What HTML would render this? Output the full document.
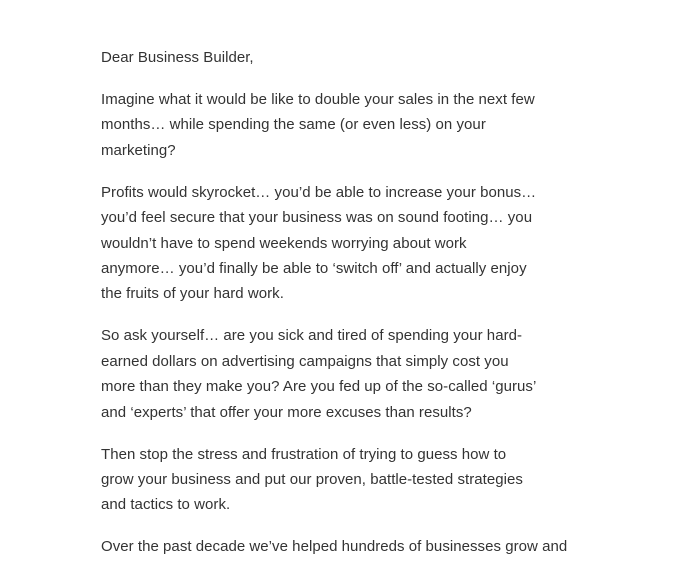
<!DOCTYPE html>
<html><head><meta charset="utf-8"><style>
html,body{margin:0;padding:0;background:#fff;width:684px;height:541px;overflow:hidden}
.w{position:absolute;left:101px;top:45px;font-family:"Liberation Sans",sans-serif;font-size:15px;line-height:25.4px;color:#333;letter-spacing:0.04px}
p{margin:0 0 16.6px 0;white-space:nowrap}
</style></head><body><div class="w">
<p>Dear Business Builder,</p>
<p>Imagine what it would be like to double your sales in the next few<br>months… while spending the same (or even less) on your<br>marketing?</p>
<p>Profits would skyrocket… you’d be able to increase your bonus…<br>you’d feel secure that your business was on sound footing… you<br>wouldn’t have to spend weekends worrying about work<br>anymore… you’d finally be able to ‘switch off’ and actually enjoy<br>the fruits of your hard work.</p>
<p>So ask yourself… are you sick and tired of spending your hard-<br>earned dollars on advertising campaigns that simply cost you<br>more than they make you? Are you fed up of the so-called ‘gurus’<br>and ‘experts’ that offer your more excuses than results?</p>
<p>Then stop the stress and frustration of trying to guess how to<br>grow your business and put our proven, battle-tested strategies<br>and tactics to work.</p>
<p>Over the past decade we’ve helped hundreds of businesses grow and</p>
</div></body></html>
